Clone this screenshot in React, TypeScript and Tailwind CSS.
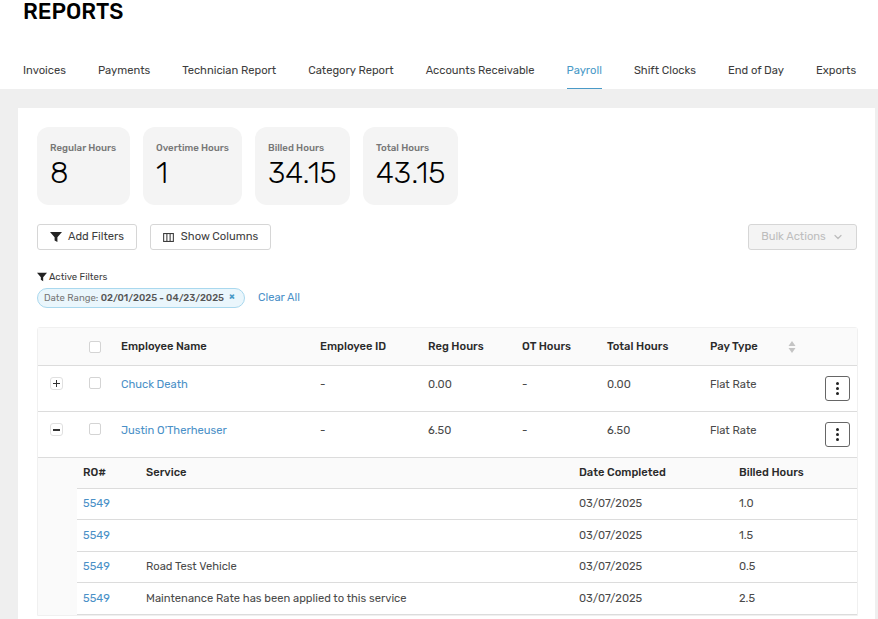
import React from 'react';
import { ChevronDown } from 'lucide-react';

const TABS = ['Invoices', 'Payments', 'Technician Report', 'Category Report', 'Accounts Receivable', 'Payroll', 'Shift Clocks', 'End of Day', 'Exports'];

const STATS = [
  { label: 'Regular Hours', value: '8', width: 'w-[93px]' },
  { label: 'Overtime Hours', value: '1', width: 'w-[99px]' },
  { label: 'Billed Hours', value: '34.15', width: 'w-[95px]' },
  { label: 'Total Hours', value: '43.15', width: 'w-[95px]' },
];

const EMPLOYEES = [
  { name: 'Chuck Death', reg: '0.00', total: '0.00', open: false },
  { name: "Justin O'Therheuser", reg: '6.50', total: '6.50', open: true },
];

const SERVICES = [
  { service: '', hours: '1.0', height: 'h-[31px]' },
  { service: '', hours: '1.5', height: 'h-[32px]' },
  { service: 'Road Test Vehicle', hours: '0.5', height: 'h-[31px]' },
  { service: 'Maintenance Rate has been applied to this service', hours: '2.5', height: 'h-[32px]' },
];

const MAIN_COLS = 'grid grid-cols-[51px_32px_199px_108px_94px_85px_103px_1fr]';
const SUB_COLS = 'grid grid-cols-[63px_433px_160px_1fr]';

const Funnel = ({ className }: { className: string }) => (
  <svg viewBox="0 0 12 12" className={className} fill="currentColor">
    <path d="M0 1h12L7.4 6.2V11L4.6 9.4V6.2z" />
  </svg>
);

const ColumnsIcon = () => (
  <svg viewBox="0 0 12 10" className="w-[11px] h-[9px]" fill="none" stroke="currentColor" strokeWidth="1.2">
    <rect x="0.6" y="0.6" width="10.8" height="8.8" />
    <path d="M4.2 0.6v8.8M7.8 0.6v8.8" />
  </svg>
);

const Checkbox = () => <div className="w-[10px] h-[10px] box-content border border-[#d4d4d4] rounded-[2px] bg-white" />;

export default function App() {
  return (
    <div className="w-[878px] h-[619px] overflow-hidden bg-[#efefef] text-[#4a4a4a] text-[11.2px] font-['Rubik','Roboto','Liberation_Sans',sans-serif]">
      {/* Header */}
      <div className="bg-white h-[89px] px-[23px] flex flex-col justify-between">
        <h1 className="text-[22px] leading-[24px] font-medium text-black">REPORTS</h1>
        <div className="flex gap-[32px] whitespace-nowrap">
          {TABS.map(tab => (
            <div
              key={tab}
              className={`h-[27px] pt-[2px] leading-[14px] ${tab === 'Payroll' ? 'text-[#4a9ac7] border-b border-[#4a9ac7]' : 'text-[#3d3d3d]'}`}
            >
              {tab}
            </div>
          ))}
        </div>
      </div>

      <div className="pt-[19px] pl-[18px] pr-[3px]">
        <div className="bg-white h-[600px] pt-[19px] pl-[19px] pr-[17px]">
          {/* Stat cards */}
          <div className="flex gap-[13px]">
            {STATS.map(s => (
              <div key={s.label} className={`${s.width} h-[78px] rounded-[12px] bg-[#f4f4f4] pt-[14px] pl-[13px]`}>
                <div className="text-[9.7px] leading-[14px] font-medium text-[#777777] whitespace-nowrap">{s.label}</div>
                <div className="text-[30px] leading-[36px] font-light text-black">{s.value}</div>
              </div>
            ))}
          </div>

          {/* Actions */}
          <div className="flex items-center justify-between mt-[19px] pr-px">
            <div className="flex gap-[13px]">
              <button className="w-[100px] h-[26px] flex items-center justify-center gap-[6px] border border-[#d6d6d6] rounded-[3px] text-[#3d3d3d]">
                <Funnel className="w-[12px] h-[12px] text-[#222222]" />
                Add Filters
              </button>
              <button className="w-[121px] h-[26px] flex items-center justify-center gap-[7px] border border-[#d6d6d6] rounded-[3px] text-[#3d3d3d]">
                <ColumnsIcon />
                Show Columns
              </button>
            </div>
            <button className="w-[109px] h-[26px] flex items-center justify-center gap-[6px] border border-[#d6d6d6] rounded-[3px] bg-[#f4f4f4] text-[#bdbdbd]">
              Bulk Actions
              <ChevronDown size={12} strokeWidth={2.5} />
            </button>
          </div>

          {/* Active filters */}
          <div className="mt-[21px] flex items-center gap-[2px] text-[9.6px] leading-[12px] text-[#3d3d3d]">
            <Funnel className="w-[10px] h-[10px] text-[#222222]" />
            Active Filters
          </div>
          <div className="mt-[5px] flex items-center gap-[13px]">
            <div className="w-[208px] h-5 flex items-center pl-[6px] border border-[#a9d8ee] rounded-full bg-[#eaf6fc] text-[9.6px] text-[#777777] whitespace-nowrap">
              Date Range:&nbsp;<span className="font-medium text-[#555555]">02/01/2025 - 04/23/2025</span>
              <span className="ml-[5px] -mt-[3px] font-bold text-[#4a9ac7]">×</span>
            </div>
            <span className="text-[#4a90c7]">Clear All</span>
          </div>

          {/* Table */}
          <div className="mt-[19px] border border-[#f0f0f0] rounded-t-[3px]">
            <div className={`${MAIN_COLS} h-[38px] items-center bg-[#fafafa] border-b border-[#dcdcdc] font-medium text-[#2b2b2b]`}>
              <div />
              <Checkbox />
              <div className="pt-[2px]">Employee Name</div>
              <div className="pt-[2px]">Employee ID</div>
              <div className="pt-[2px]">Reg Hours</div>
              <div className="pt-[2px]">OT Hours</div>
              <div className="pt-[2px]">Total Hours</div>
              <div className="flex items-center pt-[2px]">
                <span className="w-[78px]">Pay Type</span>
                <svg viewBox="0 0 8 12" className="w-[8px] h-[12px] text-[#c4c4c4]" fill="currentColor">
                  <path d="M4 0l3.5 5h-7zM4 12L0.5 7h7z" />
                </svg>
              </div>
            </div>

            {EMPLOYEES.map(e => (
              <div key={e.name} className={`${MAIN_COLS} h-[46px] border-b border-[#dcdcdc] pt-[11px]`}>
                <div className="pl-[12px]">
                  <div className="w-[11px] h-[11px] box-content border border-[#e0e0e0] rounded-[3px] flex items-center justify-center text-[#333333]">
                    <div className={`relative w-[7px] ${e.open ? 'h-[2px]' : 'h-px'} bg-current`}>
                      {!e.open && <div className="absolute left-[3px] -top-[3px] w-px h-[7px] bg-current" />}
                    </div>
                  </div>
                </div>
                <Checkbox />
                <div className="text-[#4a90c7] leading-[14px] pt-px">{e.name}</div>
                <div className="leading-[14px] pt-px">-</div>
                <div className="leading-[14px] pt-px">{e.reg}</div>
                <div className="leading-[14px] pt-px">-</div>
                <div className="leading-[14px] pt-px">{e.total}</div>
                <div className="flex justify-between leading-[14px] pr-[7px]">
                  <span className="pt-px">Flat Rate</span>
                  <button className="w-[25px] h-[25px] -mt-[1px] flex flex-col items-center justify-center gap-[2px] border border-[#666666] rounded-[3px]">
                    <span className="w-[3px] h-[3px] rounded-full bg-[#222222]" />
                    <span className="w-[3px] h-[3px] rounded-full bg-[#222222]" />
                    <span className="w-[3px] h-[3px] rounded-full bg-[#222222]" />
                  </button>
                </div>
              </div>
            ))}

            {/* Expanded services */}
            <div className="flex bg-[#fafafa]">
              <div className="w-[39px] shrink-0" />
              <div className="flex-1 bg-white">
                <div className={`${SUB_COLS} h-[31px] pl-[6px] items-center bg-[#fafafa] border-b border-[#dcdcdc] font-medium text-[#2b2b2b]`}>
                  <div>RO#</div>
                  <div>Service</div>
                  <div>Date Completed</div>
                  <div>Billed Hours</div>
                </div>
                {SERVICES.map((row, i) => (
                  <div key={i} className={`${SUB_COLS} ${row.height} pl-[6px] pt-px items-center border-b border-[#dcdcdc]`}>
                    <div className="text-[#4a90c7]">5549</div>
                    <div>{row.service}</div>
                    <div>03/07/2025</div>
                    <div>{row.hours}</div>
                  </div>
                ))}
              </div>
            </div>
          </div>
        </div>
      </div>
    </div>
  );
}
